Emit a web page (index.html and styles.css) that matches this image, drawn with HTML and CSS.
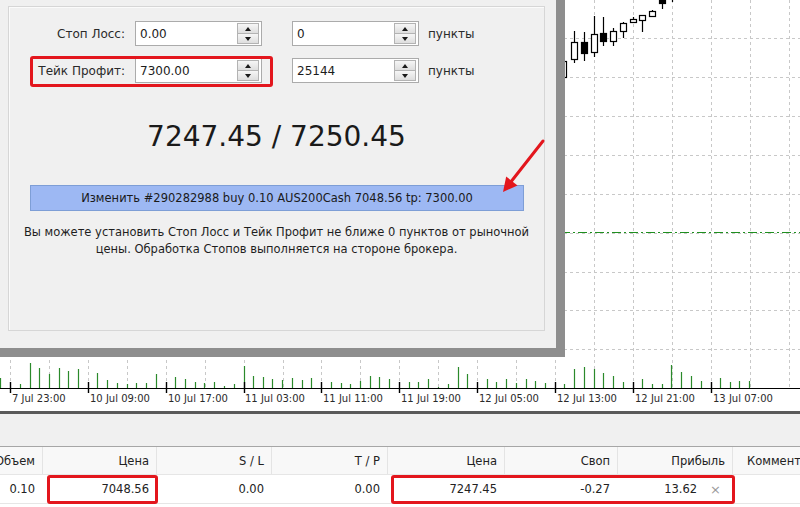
FILE: index.html
```html
<!DOCTYPE html>
<html lang="ru">
<head>
<meta charset="utf-8">
<title>Модификация ордера</title>
<link rel="stylesheet" href="styles.css">
</head>
<body>
<div class="screen">
  <div class="workspace">
    <svg class="chart" width="800" height="411" viewBox="0 0 800 411">
      <rect width="800" height="411" fill="#ffffff"/>
      <g class="grid" stroke="#c8c8c8" stroke-width="1" stroke-dasharray="3 3">
        <path d="M10.5 0V388M49.5 0V388M88.5 0V388M127.5 0V388M166.5 0V388M205.5 0V388M244.5 0V388M283.5 0V388M321.5 0V388M360.5 0V388M399.5 0V388M438.5 0V388M477.5 0V388M516.5 0V388M555.5 0V388M594.5 0V388M633.5 0V388M672.5 0V388M711.5 0V388M750.5 0V388M789.5 0V388"/>
        <path d="M0 38.5H800M0 77.5H800M0 116.5H800M0 155.5H800M0 194.5H800M0 233.5H800M0 272.5H800M0 310.5H800M0 349.5H800"/>
      </g>
      <path d="M0 232.5H800" stroke="#1f8f1f" stroke-width="1" stroke-dasharray="9 3 2 3"/>
      <g class="candles" stroke="#000" stroke-width="1.2">
        <path d="M563.5 55V80M574.5 31V63M584.5 32V61M594.5 16V57M603.5 17V46M613.5 28V46M623.5 22V38M633.5 17V23M642.5 15V32M652.5 10V16M662.5 0V9M672.5 0V2"/>
        <rect x="560.5" y="61.5" width="6" height="16" fill="#fff"/>
        <rect x="571.5" y="42.5" width="6" height="17" fill="#fff"/>
        <rect x="581.5" y="42.5" width="6" height="11" fill="#000"/>
        <rect x="591.5" y="34.5" width="6" height="18" fill="#fff"/>
        <rect x="600.5" y="33.5" width="6" height="8" fill="#000"/>
        <rect x="610.5" y="31.5" width="6" height="10" fill="#fff"/>
        <rect x="620.5" y="23.5" width="6" height="8" fill="#fff"/>
        <rect x="630.5" y="19.5" width="6" height="3" fill="#fff"/>
        <rect x="639.5" y="15.5" width="6" height="5" fill="#fff"/>
        <rect x="649.5" y="11.5" width="6" height="5" fill="#fff"/>
        <rect x="659.5" y="-1.5" width="6" height="5" fill="#000"/>
      </g>
      <path class="vol" stroke="#2b8a2b" stroke-width="1.2" fill="none" d="M0.5 388V378M20.5 388V384M30.5 388V363M39.5 388V368M49.5 388V374M59.5 388V368M68.5 388V371M78.5 388V369M97.5 388V373M107.5 388V380M117.5 388V383M127.5 388V384M136.5 388V383M146.5 388V383M156.5 388V374M175.5 388V377M185.5 388V379M195.5 388V382M204.5 388V383M214.5 388V382M224.5 388V386M234.5 388V384M244.5 388V366M253.5 388V376M263.5 388V377M272.5 388V379M282.5 388V380M292.5 388V378M302.5 388V380M311.5 388V378M331.5 388V382M341.5 388V383M350.5 388V384M360.5 388V381M370.5 388V376M379.5 388V377M389.5 388V379M409.5 388V382M418.5 388V382M428.5 388V379M438.5 388V387M448.5 388V384M458.5 388V367M467.5 388V374M487.5 388V379M496.5 388V382M506.5 388V379M516.5 388V383M526.5 388V379M535.5 388V381M545.5 388V383M564.5 388V384M574.5 388V369M584.5 388V367M594.5 388V369M603.5 388V373M613.5 388V376M623.5 388V382M642.5 388V379M652.5 388V384M662.5 388V384M671.5 388V365M681.5 388V372M691.5 388V376M701.5 388V381M720.5 388V378M730.5 388V382M739.5 388V381M749.5 388V381"/>
      <path d="M0 388.5H800" stroke="#000" stroke-width="1"/>
      <path d="M10.5 382V393M88.5 382V393M166.5 382V393M244.5 382V393M321.5 382V393M399.5 382V393M477.5 382V393M555.5 382V393M633.5 382V393M711.5 382V393" stroke="#000" stroke-width="1.4"/>
      <g class="axis">
        <text x="12" y="402">7 Jul 23:00</text>
        <text x="90" y="402">10 Jul 09:00</text>
        <text x="168" y="402">10 Jul 17:00</text>
        <text x="245" y="402">11 Jul 03:00</text>
        <text x="323" y="402">11 Jul 11:00</text>
        <text x="401" y="402">11 Jul 19:00</text>
        <text x="479" y="402">12 Jul 05:00</text>
        <text x="557" y="402">12 Jul 13:00</text>
        <text x="635" y="402">12 Jul 21:00</text>
        <text x="713" y="402">13 Jul 07:00</text>
      </g>
    </svg>

    <div class="dialog">
      <div class="group">
        <div class="row">
          <div class="lbl">Стоп Лосс:</div>
          <div class="field"><span class="val">0.00</span><span class="spin"><span class="btn"><i class="up"></i></span><span class="btn"><i class="dn"></i></span></span></div>
          <div class="field second"><span class="val">0</span><span class="spin"><span class="btn"><i class="up"></i></span><span class="btn"><i class="dn"></i></span></span></div>
          <div class="unit">пункты</div>
        </div>
        <div class="row">
          <div class="pair marked">
            <div class="lbl">Тейк Профит:</div>
            <div class="field"><span class="val">7300.00</span><span class="spin"><span class="btn"><i class="up"></i></span><span class="btn"><i class="dn"></i></span></span></div>
          </div>
          <div class="field second"><span class="val">25144</span><span class="spin"><span class="btn"><i class="up"></i></span><span class="btn"><i class="dn"></i></span></span></div>
          <div class="unit">пункты</div>
        </div>
        <div class="price">7247.45 / 7250.45</div>
        <div class="modify">Изменить #290282988 buy 0.10 AUS200Cash 7048.56 tp: 7300.00</div>
        <div class="note">Вы можете установить Стоп Лосс и Тейк Профит не ближе 0 пунктов от рыночной<br>цены. Обработка Стопов выполняется на стороне брокера.</div>
      </div>
    </div>

    <svg class="arrow" width="65" height="70" viewBox="0 0 65 70">
      <path d="M53 11L21.6 51" stroke="#e3161d" stroke-width="3" stroke-linecap="round"/>
      <polygon points="13,62 27.5,55.5 16.2,46.5" fill="#e3161d"/>
    </svg>
  </div>

  <div class="splitter"></div>

  <div class="terminal">
    <div class="toolbar"></div>
    <div class="trow head">
      <div class="cell">Объем</div>
      <div class="cell">Цена</div>
      <div class="cell">S / L</div>
      <div class="cell">T / P</div>
      <div class="cell">Цена</div>
      <div class="cell">Своп</div>
      <div class="cell">Прибыль</div>
      <div class="cell last">Комментарий</div>
    </div>
    <div class="trow data">
      <div class="cell">0.10</div>
      <div class="cell">7048.56</div>
      <div class="cell">0.00</div>
      <div class="cell">0.00</div>
      <div class="cell">7247.45</div>
      <div class="cell">-0.27</div>
      <div class="cell profit">13.62<span class="close">×</span></div>
      <div class="cell last"></div>
      <span class="mark mark-open"></span>
      <span class="mark mark-current"></span>
    </div>
  </div>
</div>
</body>
</html>
```

FILE: styles.css
```css
html, body {
  margin: 0;
  padding: 0;
}

body {
  width: 800px;
  height: 507px;
  overflow: hidden;
  background: #ffffff;
  font-family: "DejaVu Sans", "Noto Sans", sans-serif;
  color: #1c1c1c;
}

.screen {
  width: 800px;
  height: 507px;
  display: flex;
  flex-direction: column;
}

.workspace {
  position: relative;
  height: 411px;
  flex: none;
  overflow: hidden;
  background: #ffffff;
}

.chart {
  display: block;
}

.axis text {
  font-family: "DejaVu Sans", sans-serif;
  font-size: 10px;
  fill: #2a2a2a;
}

/* modify order window, floating over the chart */
.dialog {
  position: absolute;
  left: 0;
  top: 0;
  width: 565px;
  height: 357px;
  box-sizing: border-box;
  background: #f0f0f0;
  border-right: 9px solid #8e8e8e;
  border-bottom: 9px solid #8e8e8e;
  padding: 6px 0 0 8px;
}

.group {
  width: 537px;
  height: 325px;
  box-sizing: border-box;
  border: 1px solid #d6d6d6;
  box-shadow: inset 1px 1px 0 #fbfbfb;
  padding-top: 14px;
}

.row {
  display: flex;
  align-items: center;
  height: 25px;
}

.row + .row {
  margin-top: 12px;
}

.pair {
  display: flex;
  align-items: center;
  position: relative;
}

.marked::after {
  content: "";
  position: absolute;
  left: 21px;
  top: -2px;
  width: 243px;
  height: 31px;
  box-sizing: border-box;
  border: 3px solid #e3161d;
  border-radius: 3px;
}

.lbl {
  width: 118px;
  box-sizing: border-box;
  padding-right: 2px;
  text-align: right;
  font-size: 12px;
  color: #2a2a2a;
  white-space: nowrap;
}

.field {
  width: 127px;
  height: 25px;
  box-sizing: border-box;
  margin-left: 8px;
  border: 1px solid #ababab;
  background: #ffffff;
  display: flex;
  align-items: center;
  padding-left: 4px;
  font-size: 12px;
  color: #1c1c1c;
}

.field.second {
  margin-left: 30px;
}

.spin {
  margin-left: auto;
  margin-right: 2px;
  width: 22px;
  height: 21px;
  display: flex;
  flex-direction: column;
}

.btn {
  flex: 1;
  box-sizing: border-box;
  border: 1px solid #b3b3b3;
  background: linear-gradient(#f6f6f6, #dedede);
  display: flex;
  align-items: center;
  justify-content: center;
}

.btn + .btn {
  border-top: none;
}

.btn i {
  width: 0;
  height: 0;
  border-left: 3.5px solid transparent;
  border-right: 3.5px solid transparent;
}

.btn .up {
  border-bottom: 4px solid #1a1a1a;
}

.btn .dn {
  border-top: 4px solid #1a1a1a;
}

.unit {
  margin-left: 9px;
  font-size: 12px;
  color: #2a2a2a;
}

.price {
  margin-top: 37px;
  height: 33px;
  line-height: 33px;
  text-align: center;
  font-size: 28px;
  color: #1a1a1a;
}

.modify {
  margin: 32px 0 0 21px;
  width: 494px;
  height: 26px;
  box-sizing: border-box;
  background: #9db8f3;
  border: 1px solid #7e9ed6;
  text-align: center;
  font-size: 11.5px;
  line-height: 24px;
  color: #1a1a1a;
  white-space: nowrap;
}

.note {
  margin-top: 13px;
  text-align: center;
  font-size: 11.5px;
  line-height: 16.5px;
  color: #1e1e1e;
}

.arrow {
  position: absolute;
  left: 490px;
  top: 130px;
}

/* terminal panel */
.splitter {
  height: 3px;
  flex: none;
  background: #5a5a5a;
}

.terminal {
  flex: 1;
  background: #ffffff;
}

.toolbar {
  height: 32px;
  background: #f0f0f0;
  border-bottom: 1px solid #a6a6a6;
}

.trow {
  position: relative;
  display: grid;
  grid-template-columns: 43px 114px 115px 116px 117px 113px 115px 1fr;
  border-bottom: 1px solid #e6e6e6;
  font-size: 11.5px;
  color: #222;
}

.head {
  height: 27px;
  background: #f8f8f8;
}

.data {
  height: 28px;
  background: #ffffff;
}

.cell {
  display: flex;
  align-items: center;
  justify-content: flex-end;
  padding-right: 8px;
  white-space: nowrap;
  overflow: visible;
  min-width: 0;
}

.head .cell {
  border-right: 1px solid #e4e4e4;
  padding-right: 7px;
}

.head .cell.last {
  border-right: none;
  justify-content: flex-start;
  padding-left: 14px;
}

.profit {
  padding-right: 12px;
}

.close {
  margin-left: 13px;
  color: #9a9a9a;
  font-size: 13px;
}

.mark {
  position: absolute;
  top: 0;
  height: 29px;
  box-sizing: border-box;
  border: 3px solid #e3161d;
  border-radius: 3px;
}

.mark-open {
  left: 47px;
  width: 111px;
}

.mark-current {
  left: 391px;
  width: 344px;
}
```
